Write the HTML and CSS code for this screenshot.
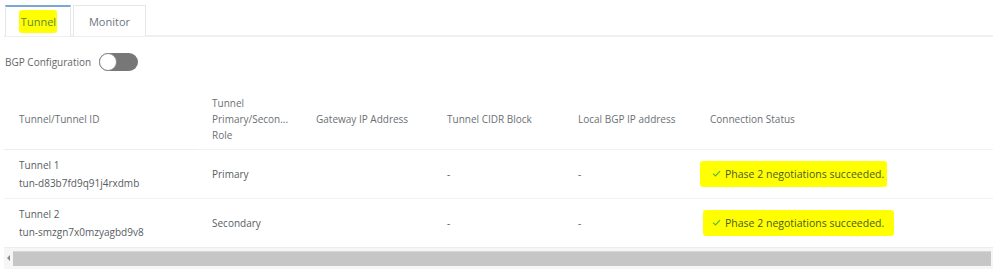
FILE: index.html
```html
<!DOCTYPE html>
<html lang="en">
  <head>
    <meta charset="UTF-8" />
    <meta name="viewport" content="width=device-width, initial-scale=1.0" />
    <title>VPN Connection - Tunnel</title>
    <link rel="stylesheet" href="styles.css">
  </head>
  <body>
    <div class="page">
      <div class="tabs">
        <div class="tab active"><span class="mark">Tunnel</span></div>
        <div class="tab">Monitor</div>
      </div>

      <div class="bgp">
        <span>BGP Configuration</span>
        <span class="switch"><span class="knob"></span></span>
      </div>

      <div class="table-wrap">
        <table class="tunnels">
          <colgroup>
            <col class="c-id" />
            <col class="c-role" />
            <col class="c-gw" />
            <col class="c-cidr" />
            <col class="c-bgp" />
            <col class="c-status" />
          </colgroup>
          <thead>
            <tr>
              <th class="fixed">Tunnel/Tunnel ID</th>
              <th>Tunnel<br />Primary/Secon...<br />Role</th>
              <th>Gateway IP Address</th>
              <th>Tunnel CIDR Block</th>
              <th>Local BGP IP address</th>
              <th>Connection Status</th>
            </tr>
          </thead>
          <tbody>
            <tr>
              <td class="fixed">Tunnel 1<br />tun-d83b7fd9q91j4rxdmb</td>
              <td>Primary</td>
              <td></td>
              <td>-</td>
              <td>-</td>
              <td>
                <span class="mark status">
                  <svg class="check" viewBox="0 0 10 8" width="9" height="7"><path d="M1 4.2 L3.8 6.8 L9 1.2" fill="none" stroke="#52b64a" stroke-width="1.3" /></svg>
                  Phase 2 negotiations succeeded.
                </span>
              </td>
            </tr>
            <tr>
              <td class="fixed">Tunnel 2<br />tun-smzgn7x0mzyagbd9v8</td>
              <td>Secondary</td>
              <td></td>
              <td>-</td>
              <td>-</td>
              <td>
                <span class="mark status second">
                  <svg class="check" viewBox="0 0 10 8" width="9" height="7"><path d="M1 4.2 L3.8 6.8 L9 1.2" fill="none" stroke="#52b64a" stroke-width="1.3" /></svg>
                  Phase 2 negotiations succeeded.
                </span>
              </td>
            </tr>
          </tbody>
        </table>
      </div>

      <div class="hscroll">
        <span class="arrow"></span>
        <span class="thumb"></span>
      </div>
    </div>
  </body>
</html>
```

FILE: styles.css
```css
* {
  margin: 0;
  padding: 0;
  box-sizing: border-box;
}
body {
  font-family: "Open Sans", "Noto Sans", sans-serif;
  font-size: 10px;
  color: #5f6368;
  background: #fff;
  width: 997px;
  height: 270px;
  overflow: hidden;
}
.page {
  padding: 5px 4px 0 4px;
}
.tabs {
  display: flex;
  height: 32px;
  border-bottom: 2px solid #eef0f0;
  padding-left: 1px;
}
.tab {
  width: 66px;
  height: 31px;
  border: 1px solid #e6e8e8;
  border-bottom: none;
  display: flex;
  align-items: center;
  justify-content: center;
  font-size: 11px;
  color: #6d7680;
  margin-right: 2px;
  background: #fff;
}
.tab + .tab {
  width: 73px;
}
.tab.active {
  border-top: 2px solid #7aa7d8;
  color: #5a8a3c;
}
.mark {
  background: #ffff00;
  border-radius: 3px;
}
.tab .mark {
  padding: 4px 1px 4px 2px;
}
.bgp {
  display: flex;
  align-items: center;
  gap: 8px;
  margin-top: 16px;
  padding-left: 1px;
  color: #666;
}
.switch {
  position: relative;
  width: 39px;
  height: 18px;
  border-radius: 9px;
  background: #777;
}
.knob {
  position: absolute;
  left: 0;
  top: 0;
  width: 18px;
  height: 18px;
  border-radius: 50%;
  background: #fff;
  border: 1px solid #8a8a8a;
}
.table-wrap {
  margin-top: 18px;
  width: 989px;
}
.tunnels {
  width: 100%;
  border-collapse: collapse;
  table-layout: fixed;
}
.c-id { width: 193px; }
.c-role { width: 104px; }
.c-gw { width: 131px; }
.c-cidr { width: 131px; }
.c-bgp { width: 132px; }
th,
td {
  text-align: left;
  vertical-align: middle;
  padding: 0 0 0 15px;
  font-weight: 400;
  white-space: nowrap;
}
th {
  height: 60px;
  line-height: 16px;
  color: #6b6f75;
}
td {
  height: 49px;
  line-height: 18px;
  color: #585c62;
  border-top: 1px solid #f1f2f2;
}
th.fixed {
  border-bottom: 1px solid #eceeee;
}
.status {
  display: inline-flex;
  align-items: center;
  gap: 4px;
  padding: 4px 3px 4px 12px;
  margin-left: -10px;
  font-size: 10.5px;
  color: #4c5a2a;
}
.status.second {
  margin-left: -7px;
  padding-left: 9px;
  padding-right: 10px;
}
.hscroll {
  position: relative;
  height: 22px;
  background: #f6f6f6;
  width: 989px;
  border-top: 1px solid #ededed;
}
.arrow {
  position: absolute;
  left: 3px;
  top: 7px;
  width: 0;
  height: 0;
  border-top: 3px solid transparent;
  border-bottom: 3px solid transparent;
  border-right: 3px solid #8a8a8a;
}
.thumb {
  position: absolute;
  left: 9px;
  right: 2px;
  top: 3px;
  height: 15px;
  background: #c6c6c6;
  border-top: 1px solid #d6d6d6;
}
```
